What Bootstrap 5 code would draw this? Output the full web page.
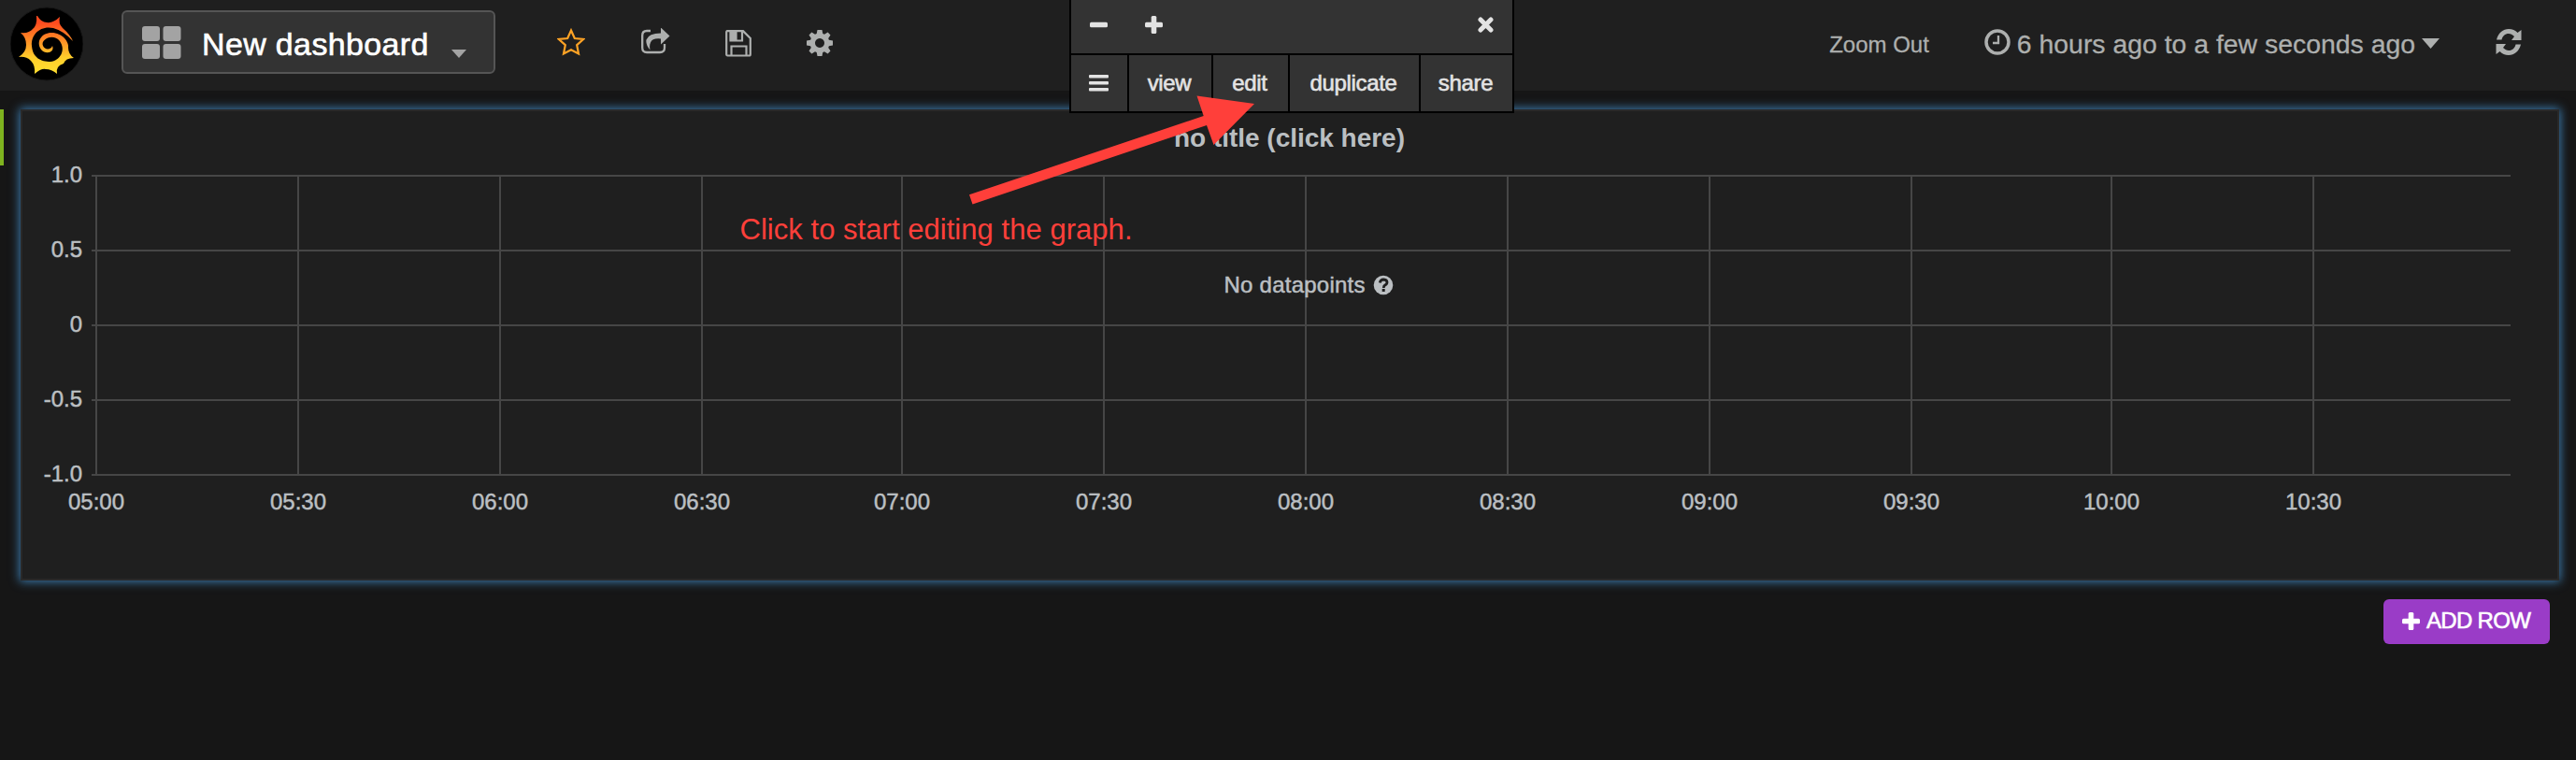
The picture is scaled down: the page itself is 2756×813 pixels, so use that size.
<!DOCTYPE html>
<html lang="en" data-bs-theme="dark">
<head>
<meta charset="utf-8">
<title>New dashboard</title>
<link href="https://cdn.jsdelivr.net/npm/bootstrap@5.3.0/dist/css/bootstrap.min.css" rel="stylesheet">
<style>
body{background:#161616;font-family:"Liberation Sans",Arial,sans-serif;font-size:24px;line-height:1;color:#bbbfc2;height:813px;overflow:hidden}
svg{display:block;flex:none}
.topbar{height:97px;background:#1f1f1f;color:#adafae;padding:0 58px 11px 11px}
.dash-picker{width:400px;height:68px;margin:4px 0 0 41px;padding:0 0 0 20px;background:#333;border:2px solid #555;border-radius:6px;color:#fff;font-size:34px}
.dash-picker span{-webkit-text-stroke:.6px;margin:4px 24px 0 22px;letter-spacing:.35px}
.tools{margin:4px 0 0 66px}
.zoomout{margin:9px 59px 0 0;-webkit-text-stroke:.3px}
.range{font-size:28.4px;margin-top:9px;-webkit-text-stroke:.3px}
.graph-panel{position:relative;margin:20px 18px 0 22px;height:504px;background:#1f1f1f;border:2px solid #292929;box-shadow:0 0 10px 1px #3d7fb4}
.row-handle{position:absolute;left:0;top:117px;width:4px;height:60px;background:#7eb31f}
.panel-menu{position:absolute;left:1144px;top:0;width:476px;height:121px;background:#333;border:2px solid #000;border-top:0;color:#e3e3e3;z-index:3}
.menu-top{height:59px;border-bottom:2px solid #000;padding:0 20px 5px}
.menu-items{height:60px}
.menu-items>*{border-left:2px solid #000;display:flex;align-items:center;justify-content:center;-webkit-text-stroke:.6px;letter-spacing:-.35px;padding:0 2px 1px 0}
.menu-items>:first-child{border-left:0}
.add-row{width:178px;height:48px;margin:20px 28px 0 auto;background:#9a3cc7;border-radius:6px;color:#fff;font-size:24px;padding:0 0 2px 20px;gap:7px;letter-spacing:-.7px;-webkit-text-stroke:.6px}
.over{position:absolute;left:0;top:0;z-index:4;pointer-events:none}
.chart{position:absolute;left:-24px;top:-119px}
</style>
</head>
<body class="position-relative">
<nav class="topbar d-flex align-items-center">
  <svg width="78" height="84" viewBox="0 0 78 84" style="margin-top:8px">
    <defs><linearGradient id="sun" x1="0" y1="0" x2="0" y2="1"><stop offset=".12" stop-color="#ff4b1f"/><stop offset=".72" stop-color="#ffce2b"/><stop offset="1" stop-color="#ffdf30"/></linearGradient></defs>
    <circle cx="39" cy="42" r="39" fill="#000" stroke="#161616"/>
    <path fill="url(#sun)" d="M29 12Q33 19 39 19Q46 20 53 13Q51 20 56 25Q64 32 67 39Q57 28 46 25C32 22 22 32 23 44C24 57 33 61 43 61C53 60 60 49 53 39C46 30 32 37 35 44C37 49 44 48 45 44C48 51 38 54 33 48C27 39 34 30 44 30C56 30 63 40 62 46Q62 53 68 57Q59 57 57 63Q48 66 50 74Q44 69 38 69Q33 68 26 74Q27 65 22 60Q17 55 9 56Q17 51 17 43Q17 35 11 30Q20 31 24 26Q29 22 28 12Z"/>
  </svg>
  <button class="dash-picker btn d-flex align-items-center lh-1 text-nowrap">
    <svg width="42" height="35" fill="#a3a3a3"><rect width="19" height="16" rx="3"/><rect x="22.500" width="19" height="16" rx="3"/><rect y="19" width="19" height="16" rx="3"/><rect x="22.500" y="19" width="19" height="16" rx="3"/></svg>
    <span>New dashboard</span>
    <svg width="16" height="9" fill="#a3a3a3" style="margin-top:25px"><path d="M0 0H16L8 9Z"/></svg>
  </button>
  <div class="tools d-flex align-items-center">
    <svg width="30" height="30" viewBox="0 0 30 30" fill="none" stroke="#fea325" stroke-width="2.200"><path d="M15 2.500L18.800 11L28 12L21.200 18.200L23 27.500L15 23.200L7 27.500L8.800 18.200L2 12L11.200 11Z"/></svg>
    <svg width="31" height="30" viewBox="0 0 31 30" fill="#adafae" style="margin-left:60px"><path d="M10 3H6Q1.200 3 1.200 8V21Q1.200 26 6 26H20Q25 26 25 21V17" fill="none" stroke="#adafae" stroke-width="2.300"/><path d="M21 -.5L30.500 8.500L21 17.500V11.500Q12 10.500 10 15.500Q8.500 18.500 9.500 23.500Q4.500 17.500 5.500 12.500Q8 5.500 21 5.500Z"/></svg>
    <svg width="28" height="29" viewBox="0 0 28 29" fill="none" stroke="#adafae" stroke-width="2.200" style="margin:2px 0 0 59px"><path d="M2 1.200H19L26.800 9V26Q26.800 27.500 25.500 27.500H2.500Q1.200 27.500 1.200 26V2.500Q1.200 1.200 2 1.200ZM6.500 27V17.500H22.500V27M5.500 1V11.500H18V1"/><path d="M6 2H11.500V10H6Z" fill="#adafae"/></svg>
    <svg width="28" height="28" viewBox="-14 -14 28 28" fill="#adafae" style="margin:1px 0 0 59px"><path fill-rule="evenodd" d="M-2.500-14H2.500L3.300-9.900L5-9.200L8.600-11.500L11.500-8.600L9.200-5L9.900-3.300L14-2.500V2.500L9.900 3.300L9.200 5L11.500 8.600L8.600 11.500L5 9.200L3.300 9.900L2.500 14H-2.500L-3.300 9.900L-5 9.200L-8.600 11.500L-11.500 8.600L-9.200 5L-9.900 3.300L-14 2.500V-2.500L-9.900-3.300L-9.200-5L-11.500-8.600L-8.600-11.500L-5-9.200L-3.300-9.900ZM0-5A5 5 0 1 0 .01-5Z"/></svg>
  </div>
  <div class="ms-auto zoomout">Zoom Out</div>
  <div class="range d-flex align-items-center">
    <svg width="28" height="28" viewBox="0 0 28 28" fill="none" stroke="#adafae" style="margin:-5px 7px 0 0"><circle cx="14" cy="14" r="12" stroke-width="3.500"/><path d="M15 7V15H9" stroke-width="2.300"/></svg>
    <span>6 hours ago to a few seconds ago</span>
    <svg width="19" height="11" fill="#adafae" style="margin:-3px 0 0 7px"><path d="M0 0H19L9.500 11Z"/></svg>
  </div>
  <svg width="28" height="28" viewBox="0 0 28 28" fill="#adafae" style="margin:4px 0 0 60px"><g id="ra"><path d="M1 11.500C3 4 8 0 14 0C18 0 21 1.500 23.500 4L27.500 1V12H17L20 8C18 6 16 5 14 5C10 5 7.500 7.500 6.500 11.500Z"/></g><use href="#ra" transform="rotate(180 14 14)"/></svg>
</nav>
<div class="row-handle"></div>
<main class="graph-panel">
  <svg class="chart" id="chart" width="2756" height="640" fill="#bbbfc2" font-size="24"></svg>
</main>
<button class="add-row btn d-flex align-items-center border-0 lh-1">
  <svg width="19" height="19" fill="#fff"><rect y="6.700" width="19" height="5.600" rx="1.500"/><rect x="6.700" width="5.600" height="19" rx="1.500"/></svg><span>ADD ROW</span>
</button>
<div class="panel-menu">
  <div class="menu-top d-flex align-items-center">
    <svg width="19" height="19" fill="#e3e3e3"><rect y="6.700" width="19" height="5.600" rx="1.500"/></svg>
    <svg width="19" height="19" fill="#e3e3e3" style="margin-left:40px"><rect y="6.700" width="19" height="5.600" rx="1.500"/><rect x="6.700" width="5.600" height="19" rx="1.500"/></svg>
    <svg class="ms-auto" width="17" height="17" viewBox="0 0 17 17" stroke="#e3e3e3" stroke-width="5" stroke-linecap="round" style="margin-top:1px"><path d="M3 3L14 14M14 3L3 14"/></svg>
  </div>
  <div class="menu-items d-flex">
    <div style="width:60px"><svg width="21" height="18" fill="#e3e3e3"><rect width="21" height="3.400" rx="1"/><rect y="7" width="21" height="3.400" rx="1"/><rect y="14" width="21" height="3.400" rx="1"/></svg></div>
    <div style="width:90px">view</div><div style="width:82px">edit</div><div style="width:140px">duplicate</div><div style="width:100px">share</div>
  </div>
</div>
<svg class="over" width="1600" height="330">
  <path fill="#ff3f3a" d="M1037 208.300L1287.700 124L1280.500 102.500L1342 111L1298.500 155L1291 134L1040.500 218.600Z"/>
  <text x="791.500" y="256" font-size="31" fill="#ff3f3a" textLength="420">Click to start editing the graph.</text>
</svg>
<script>
let s='<g fill="#464646">';
for(let i=0;i<5;i++)s+=`<rect x="98" y="${187+80*i}" width="2588" height="2"/>`;
const xs=[102,318,534,750,964,1180,1396,1612,1828,2044,2258,2474];
xs.forEach(x=>s+=`<rect x="${x}" y="187" width="2" height="320"/>`);
s+='</g><g stroke="#bbbfc2" stroke-width=".5">';
['1.0','0.5','0','-0.5','-1.0'].forEach((t,i)=>s+=`<text x="88" y="${195+80*i}" text-anchor="end">${t}</text>`);
xs.forEach((x,i)=>s+=`<text x="${x+1}" y="545" text-anchor="middle">${String(5+(i>>1)).padStart(2,'0')}:${i%2?'30':'00'}</text>`);
s+='<text x="1256" y="157" font-size="28" font-weight="700" stroke="none" textLength="247">no title (click here)</text>';
s+='<text x="1309.500" y="312.500" font-size="24" textLength="151">No datapoints</text></g>';
s+='<circle cx="1480" cy="305" r="10.300"/><path d="M1476.300 302.500Q1477 299 1480.300 299Q1484 299.300 1484 302Q1484 304 1481.800 305Q1480.300 306 1480.300 308" fill="none" stroke="#1f1f1f" stroke-width="2.800"/><rect x="1478.700" y="309" width="3" height="3" fill="#1f1f1f"/>';
document.getElementById('chart').innerHTML=s;
</script>
<script src="https://cdn.jsdelivr.net/npm/bootstrap@5.3.0/dist/js/bootstrap.bundle.min.js"></script>
</body>
</html>
